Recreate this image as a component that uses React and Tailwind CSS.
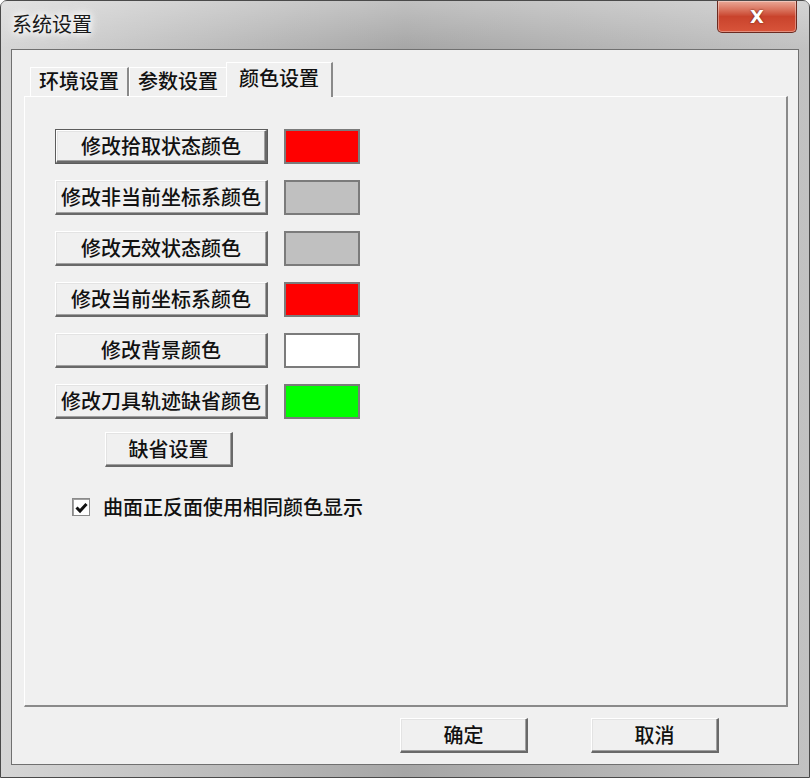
import { useState } from "react";

function WinButton({ children, className = "", isDefault = false }) {
  return (
    <div
      className={`${className} flex h-[35px] ${
        isDefault ? "border border-[#5c5c5c]" : ""
      }`}
    >
      <button className="flex flex-1 items-center justify-center border-t border-l border-r-2 border-b-2 border-t-white border-l-white border-r-[#696969] border-b-[#696969] bg-[#f0f0f0] text-[20px] leading-none font-medium text-[#111] shadow-[inset_-1px_-1px_0_#a0a0a0,inset_1px_1px_0_#e3e3e3]">
        {children}
      </button>
    </div>
  );
}

function Swatch({ color }) {
  return (
    <div
      className="h-[35px] w-[76px] border-2 border-[#7b7b7b]"
      style={{ backgroundColor: color }}
    />
  );
}

const colorRows = [
  { label: "修改拾取状态颜色", color: "#ff0000", isDefault: true },
  { label: "修改非当前坐标系颜色", color: "#c0c0c0" },
  { label: "修改无效状态颜色", color: "#c0c0c0" },
  { label: "修改当前坐标系颜色", color: "#ff0000" },
  { label: "修改背景颜色", color: "#ffffff" },
  { label: "修改刀具轨迹缺省颜色", color: "#00ff00" },
];

const tabs = ["环境设置", "参数设置", "颜色设置"];

export default function App() {
  const [active, setActive] = useState(2);
  const [sameColor, setSameColor] = useState(true);

  return (
    <div className="h-[778px] w-[810px] bg-white [font-family:'Noto_Sans_CJK_SC',sans-serif]">
      <div className="flex h-full w-full flex-col rounded-t-[7px] border border-[#4a4a4a] bg-gradient-to-r from-[#d6d6d6] via-[#a6a6a6] to-[#c2c2c2]">
        {/* title bar */}
        <div className="flex h-[48px] items-start justify-between bg-gradient-to-b from-white/30 to-transparent">
          <div className="mt-[13px] ml-[11px] text-[20px] leading-none text-[#1a1a1a] [text-shadow:0_0_6px_#fff,0_0_10px_#fff,0_0_14px_#fff]">
            系统设置
          </div>
          <div className="mr-[12px] flex h-[32px] w-[80px] items-center justify-center rounded-b-[5px] border border-t-0 border-[#6b2a20] bg-gradient-to-b from-[#e9a897] via-[#c9432c] to-[#d8543a] shadow-[inset_0_0_0_1px_rgba(255,255,255,0.35)]">
            <span className="text-[18px] leading-none font-bold text-white [font-family:'DejaVu_Sans',sans-serif] [text-shadow:0_0_2px_#5a1a10]">
              X
            </span>
          </div>
        </div>

        {/* client area */}
        <div className="mx-[10px] mb-[12px] flex flex-1 flex-col border border-[#707070] bg-[#f0f0f0] pt-[12px] pr-[10px] pl-[12px]">
          {/* tabs */}
          <div className="flex h-[34px] items-end pl-[6px]">
            {tabs.map((t, i) =>
              i === active ? (
                <div
                  key={t}
                  onClick={() => setActive(i)}
                  className="relative z-10 -mb-px -ml-[2px] flex h-[35px] w-[107px] items-start justify-center border-t border-l border-t-white border-l-white border-r-2 border-r-[#8a8a8a] bg-[#f0f0f0] pt-[5px] text-[20px] leading-none font-medium text-[#111]"
                >
                  {t}
                </div>
              ) : (
                <div
                  key={t}
                  onClick={() => setActive(i)}
                  className="flex h-[29px] w-[99px] items-start justify-center border-t border-l border-t-white border-l-white border-r-2 border-r-[#8a8a8a] bg-[#f0f0f0] pt-[3px] text-[20px] leading-none font-medium text-[#111]"
                >
                  {t}
                </div>
              )
            )}
          </div>

          {/* panel */}
          <div className="flex flex-1 flex-col border-t border-l border-r-2 border-b-2 border-t-white border-l-white border-r-[#8a8a8a] border-b-[#8a8a8a] pt-[32px] pl-[30px]">
            <div className="flex flex-col gap-[16px]">
              {colorRows.map((r) => (
                <div key={r.label} className="flex items-center gap-[16px]">
                  <WinButton className="w-[213px]" isDefault={r.isDefault}>
                    {r.label}
                  </WinButton>
                  <Swatch color={r.color} />
                </div>
              ))}
            </div>
            <WinButton className="mt-[13px] ml-[50px] w-[128px]">缺省设置</WinButton>

            <label className="mt-[30px] ml-[17px] flex items-center gap-[13px]">
              <span
                onClick={() => setSameColor(!sameColor)}
                className="flex h-[18px] w-[18px] items-center justify-center border border-[#8a8a8a] bg-white shadow-[inset_1px_1px_0_#a0a0a0]"
              >
                {sameColor && (
                  <svg width="15" height="15" viewBox="0 0 15 15">
                    <path
                      d="M2.5 7.5 L6 11 L12.5 4"
                      fill="none"
                      stroke="#111"
                      strokeWidth="3"
                    />
                  </svg>
                )}
              </span>
              <span className="text-[20px] leading-none font-medium text-[#111]">
                曲面正反面使用相同颜色显示
              </span>
            </label>
          </div>

          {/* bottom buttons */}
          <div className="flex h-[57px] items-center justify-end gap-[63px] pr-[69px]">
            <WinButton className="w-[128px]">确定</WinButton>
            <WinButton className="w-[128px]">取消</WinButton>
          </div>
        </div>
      </div>
    </div>
  );
}
